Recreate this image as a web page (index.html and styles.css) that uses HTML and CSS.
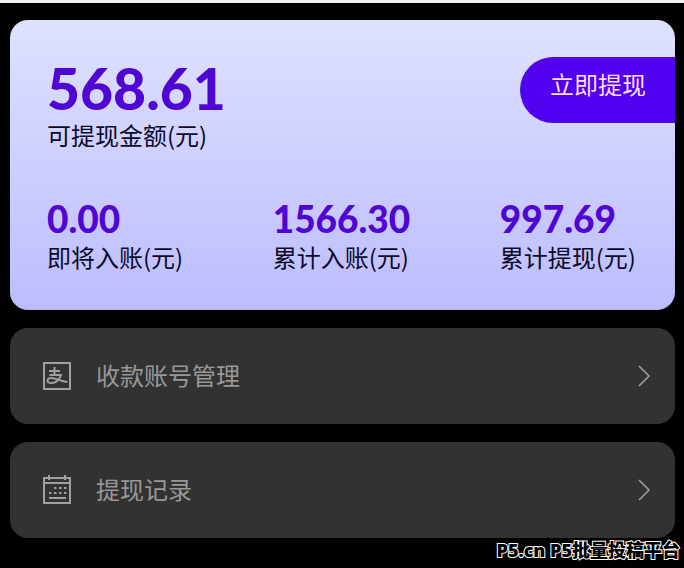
FILE: index.html
```html
<!DOCTYPE html>
<html lang="zh-CN">
<head>
    <meta charset="UTF-8">
    <meta name="viewport" content="width=device-width, initial-scale=1.0">
    <title>我的钱包</title>
    <link rel="stylesheet" href="styles.css">
</head>
<body>
    <main class="wallet">
        <section class="balance-card">
            <div class="balance-top">
                <div class="balance">
                    <div class="balance-amount">568.61</div>
                    <div class="label">可提现金额(元)</div>
                </div>
                <button class="withdraw-btn" type="button">立即提现</button>
            </div>
            <div class="stats">
                <div class="stat">
                    <div class="stat-amount">0.00</div>
                    <div class="label">即将入账(元)</div>
                </div>
                <div class="stat">
                    <div class="stat-amount">1566.30</div>
                    <div class="label">累计入账(元)</div>
                </div>
                <div class="stat">
                    <div class="stat-amount">997.69</div>
                    <div class="label">累计提现(元)</div>
                </div>
            </div>
        </section>

        <a class="menu-item" href="#account">
            <svg class="menu-icon" viewBox="0 0 30 30" aria-hidden="true">
                <rect x="2" y="2" width="26" height="26"/>
                <path d="M7 10h11M12.500 6v8M7.500 14H19c-1.500 4.500-5 8-9.500 8-2.500 0-4-1-4-2.500S7 17 9.500 17c4.500 0 9 3.500 16 4"/>
            </svg>
            <span class="menu-text">收款账号管理</span>
            <svg class="arrow" viewBox="0 0 14 22" aria-hidden="true">
                <path d="M2 1l10 10L2 21"/>
            </svg>
        </a>

        <a class="menu-item" href="#records">
            <svg class="menu-icon" viewBox="0 0 30 30" aria-hidden="true">
                <path d="M2 3h26v25H2zM2 8h26"/>
                <path d="M7 0v5M23 0v5"/>
                <path d="M12 13h2.500M17 13h2.500M22 13h2.500M7 18h2.500M12 18h2.500M17 18h2.500M22 18h2.500M7 23h17"/>
            </svg>
            <span class="menu-text">提现记录</span>
            <svg class="arrow" viewBox="0 0 14 22" aria-hidden="true">
                <path d="M2 1l10 10L2 21"/>
            </svg>
        </a>
    </main>
    <footer class="watermark">P5.cn P5批量投稿平台</footer>
</body>
</html>
```
FILE: styles.css
```css
* {
    box-sizing: border-box;
}

body {
    margin: 0;
    background-color: #000;
    border-top: 3px solid #eeeff0;
    font-family: "Noto Sans CJK SC", sans-serif;
    font-size: 24px;
}

.wallet {
    display: flex;
    flex-direction: column;
    gap: 18px;
    padding: 17px 9px 0 10px;
}

/* Tarjeta del saldo */
.balance-card {
    display: flex;
    flex-direction: column;
    gap: 46px;
    padding: 37px 0 36px;
    border-radius: 18px;
    border-bottom: 1px solid #b4b4dc;
    background: linear-gradient(#dfe1ff, #bdbcff);
    overflow: hidden;
}

.balance-top {
    display: flex;
    justify-content: space-between;
    align-items: flex-start;
    padding-left: 37px;
}

.balance-amount,
.stat-amount {
    font-family: Lato, sans-serif;
    font-weight: 900;
    color: #5006d2;
}

.balance-amount {
    font-size: 57px;
    line-height: 62px;
}

.stat-amount {
    font-size: 37px;
    line-height: 44px;
}

.label {
    line-height: 32px;
    color: #0b0b28;
}

.withdraw-btn {
    height: 66px;
    padding: 0 29px 14px;
    border: 1px solid #4a16c4;
    border-right: none;
    border-radius: 33px 0 0 33px;
    background-color: #5200f0;
    color: #ffdcf5;
    font-family: inherit;
    font-size: 24px;
    cursor: pointer;
}

.stats {
    display: flex;
    justify-content: space-between;
    padding: 0 39px 0 37px;
}

/* Opciones */
.menu-item {
    display: flex;
    align-items: center;
    height: 96px;
    padding: 0 24px 0 32px;
    border-radius: 18px;
    background-color: #323232;
    color: #989898;
    text-decoration: none;
}

.menu-icon {
    width: 30px;
    height: 30px;
    margin-right: 24px;
    fill: none;
    stroke: #a0a0a0;
    stroke-width: 2;
}

.menu-text {
    flex: 1;
    padding-bottom: 2px;
    line-height: 36px;
}

.arrow {
    width: 14px;
    height: 22px;
    fill: none;
    stroke: #a0a0a0;
    stroke-width: 1.5;
}

.watermark {
    padding-right: 4px;
    font-family: "Open Sans", "Noto Sans CJK SC", sans-serif;
    font-size: 18px;
    font-weight: 800;
    line-height: 24px;
    text-align: right;
    color: #000;
    -webkit-text-stroke: 2px #fff;
    paint-order: stroke fill;
}
```
